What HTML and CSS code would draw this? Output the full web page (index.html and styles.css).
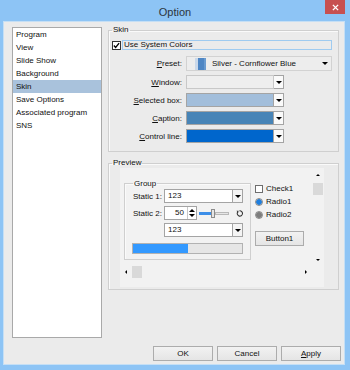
FILE: index.html
```html
<!DOCTYPE html>
<html lang="en">
<head>
<meta charset="UTF-8" />
<title>Option</title>
<link rel="stylesheet" href="styles.css">
</head>
<body>
<div class="window">
  <div class="titlebar">
    <span class="title">Option</span>
    <span class="close" aria-label="Close">
      <svg viewBox="0 0 8 8" width="7" height="7"><path d="M1 1L7 7M7 1L1 7" stroke="#fff" stroke-width="1.6"/></svg>
    </span>
  </div>

  <div class="client">
    <ul class="nav">
      <li>Program</li>
      <li>View</li>
      <li>Slide Show</li>
      <li>Background</li>
      <li class="selected">Skin</li>
      <li>Save Options</li>
      <li>Associated program</li>
      <li>SNS</li>
    </ul>

    <div class="panel">
      <fieldset class="group skin">
        <legend>Skin</legend>
        <label class="check-row">
          <span class="checkbox"><svg viewBox="0 0 8 8" width="7" height="7"><path d="M1 4L3 6.2L7 1.2" fill="none" stroke="#000" stroke-width="1.5"/></svg></span>
          <span class="focus">Use System Colors</span>
        </label>
        <div class="skin-grid">
          <span class="lbl"><u>P</u>reset:</span>
          <div class="preset">
            <span class="swatch"></span>
            <span class="preset-text">Silver - Cornflower Blue</span>
            <i class="arrow"></i>
          </div>

          <span class="lbl"><u>W</u>indow:</span>
          <div class="color-combo"><span class="fill fill-window"></span><span class="drop"><i class="arrow"></i></span></div>

          <span class="lbl"><u>S</u>elected box:</span>
          <div class="color-combo"><span class="fill fill-selected"></span><span class="drop"><i class="arrow"></i></span></div>

          <span class="lbl"><u>C</u>aption:</span>
          <div class="color-combo"><span class="fill fill-caption"></span><span class="drop"><i class="arrow"></i></span></div>

          <span class="lbl"><u>C</u>ontrol line:</span>
          <div class="color-combo"><span class="fill fill-line"></span><span class="drop"><i class="arrow"></i></span></div>
        </div>
      </fieldset>

      <fieldset class="group preview">
        <legend>Preview</legend>
        <div class="canvas">
          <div class="canvas-body">
            <fieldset class="group inner-group">
              <legend>Group</legend>
              <div class="group-grid">
                <span>Static 1:</span>
                <div class="combo"><span class="combo-text">123</span><span class="drop"><i class="arrow"></i></span></div>

                <span>Static 2:</span>
                <div class="static2">
                  <div class="spin">
                    <span class="spin-val">50</span>
                    <span class="spin-btns"><i class="arrow up"></i><i class="arrow"></i></span>
                  </div>
                  <div class="slider"><span class="slider-fill"></span><span class="thumb"></span><span class="slider-rest"></span></div>
                  <svg class="reset" viewBox="0 0 8 8" width="7" height="7"><path d="M2 2.2A3 3 0 1 0 4 1" fill="none" stroke="#333" stroke-width="1.2"/><path d="M0.6 0.8L3 0.8L2.4 3.4Z" fill="#333"/></svg>
                </div>

                <span></span>
                <div class="combo"><span class="combo-text">123</span><span class="drop"><i class="arrow"></i></span></div>
              </div>
              <div class="progress"><span class="progress-fill"></span></div>
            </fieldset>

            <div class="controls">
              <label class="opt"><span class="box"></span>Check1</label>
              <label class="opt"><span class="radio radio-on"></span>Radio1</label>
              <label class="opt"><span class="radio radio-off"></span>Radio2</label>
              <button class="btn btn-small">Button1</button>
            </div>
          </div>

          <div class="vscroll">
            <span class="sb-btn"><i class="tri tri-up"></i></span>
            <span class="sb-thumb"></span>
            <span class="sb-space"></span>
            <span class="sb-btn"><i class="tri tri-down"></i></span>
          </div>
          <div class="hscroll">
            <span class="sb-btn"><i class="tri tri-left"></i></span>
            <span class="sb-thumb"></span>
            <span class="sb-space"></span>
            <span class="sb-btn"><i class="tri tri-right"></i></span>
          </div>
        </div>
      </fieldset>
    </div>

    <div class="actions">
      <button class="btn">OK</button>
      <button class="btn">Cancel</button>
      <button class="btn"><u>A</u>pply</button>
    </div>
  </div>
</div>
</body>
</html>
```

FILE: styles.css
```css
/* Base */
* {
  box-sizing: border-box;
}
html, body {
  margin: 0;
  padding: 0;
}
body {
  width: 350px;
  height: 370px;
  overflow: hidden;
  font-family: "Liberation Sans", Arial, sans-serif;
  font-size: 8px;
  color: #111;
  background: #8dc4f5;
}
u {
  text-decoration: underline;
  text-underline-offset: 1px;
}

/* Window frame */
.window {
  height: 370px;
  display: flex;
  flex-direction: column;
  background: #8dc4f5;
}
.titlebar {
  height: 22px;
  flex: none;
  display: flex;
  align-items: center;
  justify-content: center;
  position: relative;
}
.title {
  font-size: 11px;
  color: #2c3540;
  padding-top: 2px;
}
.close {
  position: absolute;
  top: 0;
  right: 5px;
  width: 20px;
  height: 14px;
  background: #c75050;
  display: flex;
  align-items: center;
  justify-content: center;
}
.client {
  flex: 1;
  margin: 0 6px 6px 4px;
  padding: 5px 5px 0 8px;
  background: #ebebeb;
  box-shadow: 0 0 0 1px #c5dff5;
  display: grid;
  grid-template-columns: 90px 1fr;
  grid-template-rows: 311px auto;
  column-gap: 6px;
  row-gap: 8px;
}

/* Left list */
.nav {
  list-style: none;
  margin: 0;
  padding: 0;
  background: #fff;
  border: 1px solid #a9a9a9;
}
.nav li {
  height: 13px;
  line-height: 13px;
  padding-left: 3px;
  white-space: nowrap;
}
.nav li.selected {
  background: #a9c2dc;
}

/* Group boxes */
.panel {
  display: flex;
  flex-direction: column;
  gap: 6px;
  margin-top: -2px;
}
.group {
  margin: 0;
  min-width: 0;
  border: 1px solid #cfcfcf;
  box-shadow: inset 1px 1px 0 #fafafa;
}
.group legend {
  padding: 0 1px;
  line-height: 10px;
}
.skin {
  padding: 5px 6px 8px 3px;
}
.check-row {
  display: flex;
  align-items: center;
  gap: 1px;
  height: 10px;
  margin-bottom: 6px;
}
.checkbox {
  width: 9px;
  height: 9px;
  border: 1px solid #333;
  background: #fff;
  display: flex;
  align-items: center;
  justify-content: center;
}
.focus {
  flex: 1;
  height: 10px;
  line-height: 8px;
  padding-left: 1px;
  border: 1px solid #9fcbf0;
}
.skin-grid {
  display: grid;
  grid-template-columns: 70px 1fr;
  column-gap: 4px;
  row-gap: 4px;
  align-items: center;
}
.lbl {
  text-align: right;
  white-space: nowrap;
}
.preset {
  height: 15px;
  border: 1px solid #d2d2d2;
  background: #ededed;
  display: flex;
  align-items: center;
  padding: 0 3px 0 8px;
}
.swatch {
  width: 11px;
  height: 12px;
  background: linear-gradient(90deg, #c9d8ea 0 3px, #4e86c4 3px 9px, #6a9bd0 9px);
  margin-right: 6px;
}
.preset-text {
  flex: 1;
}
.arrow {
  display: block;
  width: 0;
  height: 0;
  border-left: 3px solid transparent;
  border-right: 3px solid transparent;
  border-top: 3px solid #000;
}
.arrow.up {
  border-top: 0;
  border-bottom: 3px solid #000;
}
.color-combo {
  width: 98px;
  height: 14px;
  display: flex;
}
.fill {
  flex: 1;
  border: 1px solid #a4a4a4;
}
.fill-window { background: #eeeeee; border-color: #c8c8c8; }
.fill-selected { background: #a2bedb; }
.fill-caption { background: #4784b7; }
.fill-line { background: #0066cc; }
.drop {
  width: 10px;
  border: 1px solid #a4a4a4;
  border-left: 0;
  background: #fafafa;
  display: flex;
  align-items: center;
  justify-content: center;
}

/* Preview */
.preview {
  padding: 0 14px 2px 3px;
}
.canvas {
  margin-left: 8px;
  background: #f2f2f2;
  display: grid;
  grid-template-columns: 1fr 12px;
  grid-template-rows: 98px 12px;
  padding-bottom: 9px;
}
.canvas-body {
  display: flex;
  gap: 4px;
  padding: 11px 0 0 4px;
  overflow: hidden;
}
.inner-group {
  width: 127px;
  height: 81px;
  padding: 1px 6px 0 8px;
}
.inner-group legend {
  line-height: 9px;
}
.group-grid {
  display: grid;
  grid-template-columns: 31px 79px;
  row-gap: 3px;
  align-items: center;
}
.combo {
  height: 14px;
  display: flex;
  background: #fff;
}
.combo-text {
  flex: 1;
  border: 1px solid #a4a4a4;
  line-height: 12px;
  padding-left: 3px;
}
.combo .drop {
  background: #f4f4f4;
}
.static2 {
  display: flex;
  align-items: center;
  height: 14px;
}
.spin {
  width: 33px;
  height: 14px;
  display: flex;
  background: #fff;
  border: 1px solid #a4a4a4;
}
.spin-val {
  flex: 1;
  text-align: right;
  line-height: 12px;
  padding-right: 3px;
}
.spin-btns {
  width: 9px;
  border-left: 1px solid #c8c8c8;
  display: flex;
  flex-direction: column;
  align-items: center;
  justify-content: space-evenly;
}
.slider {
  width: 30px;
  margin-left: 2px;
  display: flex;
  align-items: center;
}
.slider-fill {
  width: 12px;
  height: 3px;
  background: #3c8ee8;
}
.thumb {
  width: 4px;
  height: 9px;
  background: #e6e6e6;
  border: 1px solid #8c8c8c;
}
.slider-rest {
  flex: 1;
  height: 3px;
  border: 1px solid #b8b8b8;
  background: #e6e6e6;
}
.reset {
  margin-left: 7px;
}
.progress {
  width: 111px;
  height: 11px;
  margin: 6px 0 0 -1px;
  border: 1px solid #b2b2b2;
  background: #e6e6e6;
}
.progress-fill {
  display: block;
  width: 55px;
  height: 100%;
  background: #3399ff;
}
.controls {
  display: flex;
  flex-direction: column;
  align-items: flex-start;
  padding-top: 3px;
}
.opt {
  display: flex;
  align-items: center;
  gap: 3px;
  height: 13px;
}
.box {
  width: 8px;
  height: 8px;
  border: 1px solid #6e6e6e;
  background: #fff;
}
.radio {
  width: 8px;
  height: 8px;
  border-radius: 50%;
  border: 1px solid #8a8a8a;
}
.radio-on {
  background: radial-gradient(circle, #1e7fe0 0 2.5px, #8dbbe8 3px);
}
.radio-off {
  background: radial-gradient(circle, #7d7d7d 0 2.5px, #a8a8a8 3px);
}

/* Buttons */
.btn {
  font: inherit;
  color: #111;
  height: 15px;
  padding: 0;
  border: 1px solid #acacac;
  background: linear-gradient(#f2f2f2, #e5e5e5);
}
.btn-small {
  width: 49px;
  margin-top: 10px;
}
.actions {
  grid-column: 1 / 3;
  display: flex;
  justify-content: flex-end;
  gap: 4px;
  margin-right: -2px;
}
.actions .btn {
  width: 60px;
}

/* Scrollbars */
.vscroll {
  display: flex;
  flex-direction: column;
  align-items: center;
}
.hscroll {
  display: flex;
  align-items: center;
}
.sb-btn {
  width: 12px;
  height: 12px;
  flex: none;
  display: flex;
  align-items: center;
  justify-content: center;
}
.vscroll .sb-btn:first-child {
  height: 14px;
}
.sb-thumb {
  width: 10px;
  height: 12px;
  flex: none;
  background: #d9d9d9;
}
.vscroll .sb-thumb {
  margin-top: 1px;
}
.sb-space {
  flex: 1;
}
.tri {
  display: block;
  width: 0;
  height: 0;
  border: 2px solid transparent;
}
.tri-up { border-bottom: 2px solid #000; border-top: 0; }
.tri-down { border-top: 2px solid #000; border-bottom: 0; }
.tri-left { border-right: 2px solid #000; border-left: 0; }
.tri-right { border-left: 2px solid #000; border-right: 0; }
```
